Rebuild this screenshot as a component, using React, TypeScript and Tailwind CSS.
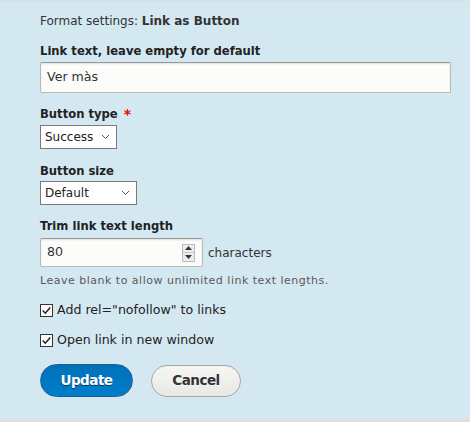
import React from "react";

const font = { fontFamily: '"DejaVu Sans", "Liberation Sans", sans-serif' };

function Chevron() {
  return (
    <svg width="9" height="6" viewBox="0 0 9 6" className="shrink-0">
      <path d="M1 1 L4.5 4.5 L8 1" fill="none" stroke="#555" strokeWidth="1" />
    </svg>
  );
}

function Check() {
  return (
    <svg width="13" height="13" viewBox="0 0 13 13" className="shrink-0">
      <rect x="0.5" y="0.5" width="12" height="12" fill="#fbfbfb" stroke="#333" strokeWidth="1" />
      <path d="M2.8 6.6 L5.3 9.2 L10.2 3.4" fill="none" stroke="#222" strokeWidth="1.5" />
    </svg>
  );
}

export default function App() {
  return (
    <div
      className="w-full h-[422px] bg-[#dedede] pt-px pb-[3px] text-[#333]"
      style={font}
    >
      <div className="h-full bg-[#d4e8f2] pl-[40px] pt-[12px] flex flex-col items-start">
        <div className="h-4 leading-4 text-[12px]">
          Format settings: <span className="font-bold">Link as Button</span>
        </div>

        <div className="mt-[14px] h-4 leading-4 text-[11.6px] font-bold text-[#222]">
          Link text, leave empty for default
        </div>
        <div className="mt-[3px] w-[411px] h-[31px] border border-[#b8b8b8] border-t-[#999] rounded-[2px] bg-[#fcfcfa] shadow-[inset_0_1px_2px_rgba(0,0,0,0.12)] flex items-center pl-[6px] text-[12.6px] text-[#333]">
          Ver màs
        </div>

        <div className="mt-[13px] h-4 leading-4 text-[11.6px] font-bold text-[#222] flex items-center">
          Button type<span className="ml-[6px] text-[#e00] text-[14px]">*</span>
        </div>
        <div className="mt-[3px] w-[77px] h-[24px] border border-[#7a7a7a] bg-white flex items-center justify-between pl-[4px] pr-[6px] text-[12px] text-[#222]">
          <span>Success</span>
          <Chevron />
        </div>

        <div className="mt-[14px] h-4 leading-4 text-[11.6px] font-bold text-[#222]">
          Button size
        </div>
        <div className="mt-[2px] w-[97px] h-[24px] border border-[#7a7a7a] bg-white flex items-center justify-between pl-[4px] pr-[6px] text-[12px] text-[#222]">
          <span>Default</span>
          <Chevron />
        </div>

        <div className="mt-[13px] h-4 leading-4 text-[11.6px] font-bold text-[#222]">
          Trim link text length
        </div>
        <div className="mt-[4px] flex items-center">
          <div className="w-[163px] h-[29px] border border-[#b8b8b8] border-t-[#999] rounded-[2px] bg-[#fcfcfa] shadow-[inset_0_1px_2px_rgba(0,0,0,0.12)] flex items-center justify-between pl-[6px] pr-[7px] text-[12.6px] text-[#333]">
            <span>80</span>
            <div className="w-[13px] h-[18px] border border-[#bbb] bg-[#ececec] flex flex-col">
              <div className="flex-1 flex items-center justify-center border-b border-[#c8c8c8]">
                <svg width="7" height="4" viewBox="0 0 7 4">
                  <path d="M0 4 L3.5 0 L7 4 Z" fill="#333" />
                </svg>
              </div>
              <div className="flex-1 flex items-center justify-center">
                <svg width="7" height="4" viewBox="0 0 7 4">
                  <path d="M0 0 L3.5 4 L7 0 Z" fill="#333" />
                </svg>
              </div>
            </div>
          </div>
          <span className="ml-[5px] text-[12px] text-[#333]">characters</span>
        </div>
        <div className="mt-[6px] h-4 leading-4 text-[11px] tracking-[0.5px] text-[#595959]">
          Leave blank to allow unlimited link text lengths.
        </div>

        <div className="mt-[13px] h-4 flex items-center gap-[4px] text-[12.6px] text-[#222]">
          <Check />
          <span>Add rel="nofollow" to links</span>
        </div>
        <div className="mt-[14px] h-4 flex items-center gap-[4px] text-[12.6px] text-[#222]">
          <Check />
          <span>Open link in new window</span>
        </div>

        <div className="mt-[16px] flex items-center gap-[18px]">
          <button className="w-[93px] h-[33px] rounded-full border border-[#1e5c90] bg-gradient-to-t from-[#007ecc] to-[#0071b8] text-white font-bold text-[13.5px] tracking-[-0.5px] [text-shadow:0_1px_0_rgba(0,0,0,0.5)]" style={font}>
            Update
          </button>
          <button className="w-[90px] h-[32px] rounded-full border border-[#a6a6a6] bg-gradient-to-t from-[#e8e8e4] to-[#f6f6f3] text-[#333] font-bold text-[13.5px] tracking-[-0.5px] [text-shadow:0_1px_0_rgba(255,255,255,0.6)]" style={font}>
            Cancel
          </button>
        </div>
      </div>
    </div>
  );
}
